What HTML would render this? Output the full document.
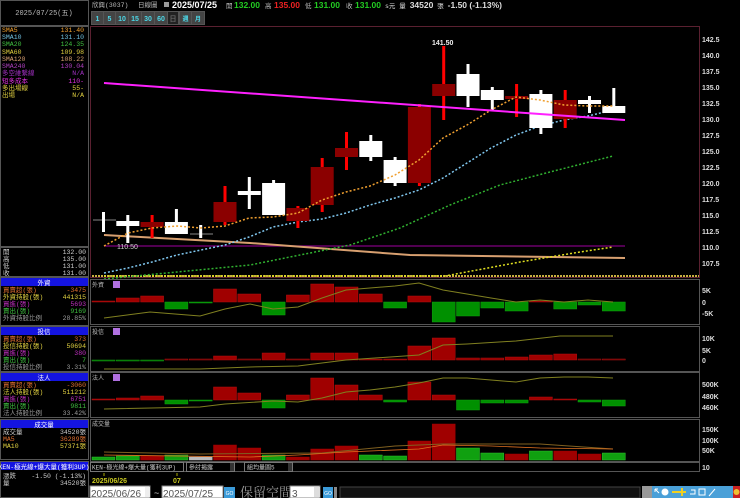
<!DOCTYPE html>
<html><head><meta charset="utf-8"><style>
html,body{margin:0;padding:0;background:#000;width:740px;height:498px;overflow:hidden}
svg{display:block;font-family:"Liberation Sans","Noto Sans CJK TC",sans-serif}
.m{font-family:"Liberation Mono","Noto Sans CJK TC",monospace}
</style></head><body>
<svg id="s" width="740" height="498" viewBox="0 0 740 498" xmlns="http://www.w3.org/2000/svg">
<rect width="740" height="498" fill="#000"/>
<g fill="none" stroke="#555" stroke-width="1">
<rect x="0.5" y="0.5" width="88" height="25"/>
<rect x="0.5" y="26.5" width="88" height="220"/>
<rect x="0.5" y="247.5" width="88" height="29"/>
<rect x="0.5" y="277.5" width="88" height="48"/>
<rect x="0.5" y="326.5" width="88" height="45"/>
<rect x="0.5" y="372.5" width="88" height="45"/>
<rect x="0.5" y="419.5" width="88" height="40"/>
<rect x="0.5" y="461.5" width="88" height="36"/>
</g>
<text x="44" y="15" fill="#bbb" font-size="7" text-anchor="middle" class="m">2025/07/25(五)</text>
<g font-size="6.5" class="m">
<text x="2" y="32" fill="#f0a030">SMA5</text><text x="84" y="32" fill="#f0a030" text-anchor="end">131.40</text>
<text x="2" y="39" fill="#70c0e0">SMA10</text><text x="84" y="39" fill="#70c0e0" text-anchor="end">131.10</text>
<text x="2" y="46" fill="#40c040">SMA20</text><text x="84" y="46" fill="#40c040" text-anchor="end">124.35</text>
<text x="2" y="54" fill="#e0d040">SMA60</text><text x="84" y="54" fill="#e0d040" text-anchor="end">109.98</text>
<text x="2" y="61" fill="#d8a070">SMA120</text><text x="84" y="61" fill="#d8a070" text-anchor="end">108.22</text>
<text x="2" y="68" fill="#b040c0">SMA240</text><text x="84" y="68" fill="#b040c0" text-anchor="end">130.04</text>
<text x="2" y="75" fill="#a030c0">多空維繫線</text><text x="84" y="75" fill="#a030c0" text-anchor="end">N/A</text>
<text x="2" y="83" fill="#e030e0">短多成本</text><text x="84" y="83" fill="#e030e0" text-anchor="end">110-</text>
<text x="2" y="90" fill="#e0d040">多出場線</text><text x="84" y="90" fill="#e0d040" text-anchor="end">55-</text>
<text x="2" y="97" fill="#e0d040">出場</text><text x="84" y="97" fill="#e0d040" text-anchor="end">N/A</text>
</g>
<g font-size="6.5" class="m" fill="#ccc">
<text x="3" y="254">開</text><text x="86" y="254" text-anchor="end">132.00</text>
<text x="3" y="261">高</text><text x="86" y="261" text-anchor="end">135.00</text>
<text x="3" y="268">低</text><text x="86" y="268" text-anchor="end">131.00</text>
<text x="3" y="275">收</text><text x="86" y="275" text-anchor="end">131.00</text>
</g>
<g font-size="6.5" class="m">
<rect x="1" y="278" width="87" height="8" fill="#1414e0"/><text x="44" y="285" fill="#fff" text-anchor="middle">外資</text>
<text x="3" y="292" fill="#e07030">買賣超(張)</text><text x="86" y="292" fill="#e07030" text-anchor="end">-3475</text>
<text x="3" y="299" fill="#e0d040">外資持股(張)</text><text x="86" y="299" fill="#e0d040" text-anchor="end">441315</text>
<text x="3" y="306" fill="#c030c0">買進(張)</text><text x="86" y="306" fill="#c030c0" text-anchor="end">5693</text>
<text x="3" y="313" fill="#40c040">賣出(張)</text><text x="86" y="313" fill="#40c040" text-anchor="end">9169</text>
<text x="3" y="320" fill="#999">外資持股比例</text><text x="86" y="320" fill="#999" text-anchor="end">28.85%</text>
<rect x="1" y="327" width="87" height="8" fill="#1414e0"/><text x="44" y="334" fill="#fff" text-anchor="middle">投信</text>
<text x="3" y="341" fill="#e07030">買賣超(張)</text><text x="86" y="341" fill="#e07030" text-anchor="end">373</text>
<text x="3" y="348" fill="#e0d040">投信持股(張)</text><text x="86" y="348" fill="#e0d040" text-anchor="end">50694</text>
<text x="3" y="355" fill="#c030c0">買進(張)</text><text x="86" y="355" fill="#c030c0" text-anchor="end">380</text>
<text x="3" y="362" fill="#40c040">賣出(張)</text><text x="86" y="362" fill="#40c040" text-anchor="end">7</text>
<text x="3" y="369" fill="#999">投信持股比例</text><text x="86" y="369" fill="#999" text-anchor="end">3.31%</text>
<rect x="1" y="373" width="87" height="8" fill="#1414e0"/><text x="44" y="380" fill="#fff" text-anchor="middle">法人</text>
<text x="3" y="387" fill="#e07030">買賣超(張)</text><text x="86" y="387" fill="#e07030" text-anchor="end">-3060</text>
<text x="3" y="394" fill="#e0d040">法人持股(張)</text><text x="86" y="394" fill="#e0d040" text-anchor="end">511212</text>
<text x="3" y="401" fill="#c030c0">買進(張)</text><text x="86" y="401" fill="#c030c0" text-anchor="end">6751</text>
<text x="3" y="408" fill="#40c040">賣出(張)</text><text x="86" y="408" fill="#40c040" text-anchor="end">9811</text>
<text x="3" y="415" fill="#999">法人持股比例</text><text x="86" y="415" fill="#999" text-anchor="end">33.42%</text>
<rect x="1" y="420" width="87" height="8" fill="#1414e0"/><text x="44" y="427" fill="#fff" text-anchor="middle">成交量</text>
<text x="3" y="434" fill="#ccc">成交量</text><text x="86" y="434" fill="#ccc" text-anchor="end">34520張</text>
<text x="3" y="441" fill="#e07030">MA5</text><text x="86" y="441" fill="#e07030" text-anchor="end">36289張</text>
<text x="3" y="448" fill="#e0d040">MA10</text><text x="86" y="448" fill="#e0d040" text-anchor="end">57371張</text>
<rect x="1" y="462" width="87" height="8" fill="#1414e0"/><text x="44" y="469" fill="#fff" text-anchor="middle">KEN-極光線+爆大量(獲利3UP)</text>
<text x="3" y="478" fill="#ccc">漲跌</text><text x="86" y="478" fill="#ccc" text-anchor="end">-1.50 (-1.13%)</text>
<text x="3" y="485" fill="#ccc">量</text><text x="86" y="485" fill="#ccc" text-anchor="end">34520張</text>
</g>
<g font-size="6.5" class="m">
<text x="92" y="7" fill="#bbb">欣興(3037)</text>
<text x="138" y="7" fill="#bbb">日線圖</text>
<rect x="164" y="2" width="5" height="5" fill="#999"/>
<text x="172" y="8" fill="#fff" font-size="9" font-weight="bold" font-family="Liberation Sans">2025/07/25</text>
<text x="226" y="8" fill="#bbb">開</text><text x="234" y="8" fill="#2c2" font-size="8.5" font-weight="bold" font-family="Liberation Sans">132.00</text>
<text x="265" y="8" fill="#bbb">高</text><text x="274" y="8" fill="#e22" font-size="8.5" font-weight="bold" font-family="Liberation Sans">135.00</text>
<text x="305" y="8" fill="#bbb">低</text><text x="314" y="8" fill="#2c2" font-size="8.5" font-weight="bold" font-family="Liberation Sans">131.00</text>
<text x="346" y="8" fill="#bbb">收</text><text x="355" y="8" fill="#2c2" font-size="8.5" font-weight="bold" font-family="Liberation Sans">131.00</text>
<text x="385" y="8" fill="#ddd">s元 量 <tspan font-weight="bold" font-family="Liberation Sans" font-size="8.5">34520</tspan> 張 <tspan font-weight="bold" font-family="Liberation Sans" font-size="8.5">-1.50 (-1.13%)</tspan></text>
</g>
<g font-size="7" font-weight="bold" font-family="Liberation Sans" fill="#4cd8e8" text-anchor="middle">
<rect x="91" y="11" width="114" height="14" fill="#555"/>
<rect x="92" y="12" width="11" height="12" fill="#444"/><text x="97.5" y="21">1</text>
<rect x="104" y="12" width="11" height="12" fill="#444"/><text x="109.5" y="21">5</text>
<rect x="116" y="12" width="12" height="12" fill="#444"/><text x="122" y="21">10</text>
<rect x="129" y="12" width="12" height="12" fill="#444"/><text x="135" y="21">15</text>
<rect x="142" y="12" width="12" height="12" fill="#444"/><text x="148" y="21">30</text>
<rect x="155" y="12" width="12" height="12" fill="#444"/><text x="161" y="21">60</text>
<rect x="168" y="12" width="10" height="12" fill="#222"/><text x="173" y="21" fill="#666">日</text>
<rect x="180" y="12" width="11" height="12" fill="#444"/><text x="185.5" y="21" font-size="6">週</text>
<rect x="192" y="12" width="12" height="12" fill="#444"/><text x="198" y="21" font-size="6">月</text>
</g>
<rect x="90.5" y="26.5" width="609" height="251" fill="none" stroke="#5a2030"/>
<g id="main"></g>
<g font-size="7" font-weight="bold" font-family="Liberation Sans" fill="#ddd">
<text x="702" y="42">142.5</text><text x="702" y="58">140.0</text><text x="702" y="74">137.5</text><text x="702" y="90">135.0</text><text x="702" y="106">132.5</text><text x="702" y="122">130.0</text><text x="702" y="138">127.5</text><text x="702" y="154">125.0</text><text x="702" y="170">122.5</text><text x="702" y="186">120.0</text><text x="702" y="202">117.5</text><text x="702" y="218">115.0</text><text x="702" y="234">112.5</text><text x="702" y="250">110.0</text><text x="702" y="266">107.5</text>
<text x="432" y="45" fill="#eee">141.50</text>
<text x="117" y="249" fill="#ccc" font-weight="normal">110.50</text>
<text x="702" y="293">5K</text><text x="702" y="305">0</text><text x="702" y="316">-5K</text>
<text x="702" y="341">10K</text><text x="702" y="353">5K</text><text x="702" y="363">0</text>
<text x="702" y="387">500K</text><text x="702" y="399">480K</text><text x="702" y="410">460K</text>
<text x="702" y="432">150K</text><text x="702" y="443">100K</text><text x="702" y="453">50K</text>
<text x="702" y="470">10</text>
</g>
<g fill="none" stroke="#555">
<rect x="90.5" y="279.5" width="609" height="45"/>
<rect x="90.5" y="326.5" width="609" height="45"/>
<rect x="90.5" y="372.5" width="609" height="45"/>
<rect x="90.5" y="419.5" width="609" height="42"/>
<rect x="90.5" y="462.5" width="609" height="9"/>
</g>
<g font-size="6" class="m" fill="#bbb">
<text x="92" y="287">外資</text><rect x="113" y="281" width="7" height="7" fill="#b070e0"/>
<text x="92" y="334">投信</text><rect x="113" y="328" width="7" height="7" fill="#b070e0"/>
<text x="92" y="380">法人</text><rect x="113" y="374" width="7" height="7" fill="#b070e0"/>
<text x="92" y="426">成交量</text>
</g>
<g id="sub"></g>
<g font-size="6" class="m" fill="#ccc">
<rect x="90.5" y="462.5" width="93" height="9" fill="#000" stroke="#777"/><text x="92" y="469.5">KEN-極光線+爆大量(獲利3UP)</text>
<rect x="186.5" y="462.5" width="48" height="9" fill="#000" stroke="#777"/><text x="189" y="469.5">參討揭露</text><rect x="230" y="463" width="4" height="8" fill="#333"/>
<rect x="244.5" y="462.5" width="48" height="9" fill="#000" stroke="#777"/><text x="247" y="469.5">組均量圖5</text><rect x="288" y="463" width="4" height="8" fill="#333"/>
</g>
<line x1="104" y1="473" x2="104" y2="476" stroke="#aa0"/><line x1="177" y1="473" x2="177" y2="476" stroke="#aa0"/>
<text x="92" y="483" font-size="7" font-weight="bold" fill="#c8c820" font-family="Liberation Sans">2025/06/26</text>
<text x="173" y="483" font-size="7" font-weight="bold" fill="#c8c820" font-family="Liberation Sans">07</text>
<rect x="90" y="486" width="60" height="12" fill="#fff" stroke="#888"/>
<text x="91" y="497" font-size="10" fill="#555" font-family="Liberation Sans">2025/06/26</text>
<rect x="145" y="487" width="5" height="10" fill="#eee"/>
<text x="154" y="496" font-size="9" fill="#ccc">~</text>
<rect x="162" y="486" width="61" height="12" fill="#fff" stroke="#888"/>
<text x="163" y="497" font-size="10" fill="#555" font-family="Liberation Sans">2025/07/25</text>
<rect x="224" y="487" width="11" height="11" fill="#3a9ad8"/><text x="229.5" y="495" font-size="5" fill="#fff" text-anchor="middle">GO</text>
<text x="240" y="497" font-size="13" fill="#999" font-family="'Noto Serif CJK SC',serif">保留空間</text>
<rect x="290" y="486" width="30" height="12" fill="#fff" stroke="#888"/>
<text x="292" y="497" font-size="10" fill="#555">3</text>
<rect x="314" y="487" width="6" height="10" fill="#ddd"/>
<rect x="323" y="487" width="10" height="11" fill="#3a9ad8"/><text x="328" y="495" font-size="5" fill="#fff" text-anchor="middle">GO</text>
<rect x="334" y="487" width="3" height="11" fill="#888"/>
<rect x="340" y="487" width="300" height="11" fill="#111" stroke="#444"/>
<rect x="642" y="486" width="10" height="12" fill="#999"/>
<rect x="652" y="486" width="81" height="12" fill="#4aa0d8"/>
<rect x="733" y="486" width="7" height="12" fill="#c82020"/>
<circle cx="736.5" cy="492" r="3" fill="#f0c030"/>
<g fill="#fff" stroke="#fff">
<path d="M655 489 l4 4 M655 489 h3 M655 489 v3" fill="none"/>
<circle cx="665" cy="492" r="3.5" stroke="none"/>
<rect x="672" y="491" width="6" height="2" fill="#f0d020" stroke="none"/>
<path d="M682 488 v8 M678 492 h8" stroke="#f0d020" stroke-width="2"/>
<path d="M690 494 h5 v-4 h-4" fill="none"/>
<rect x="699" y="489" width="6" height="6" fill="none"/>
<path d="M709 496 l6 -7" fill="none"/>
</g>
<script>
var NS="http://www.w3.org/2000/svg";
function el(p,t,a){var e=document.createElementNS(NS,t);for(var k in a)e.setAttribute(k,a[k]);p.appendChild(e);return e;}
var M=document.getElementById("main"),S=document.getElementById("sub");
function X(i){return 92+i*24.3;}
el(M,"line",{x1:92,y1:276,x2:699,y2:276,stroke:"#c8b040","stroke-width":2,"stroke-dasharray":"2,1"});
el(M,"line",{x1:104,y1:246,x2:625,y2:246,stroke:"#800080","stroke-width":1.2});
el(M,"polyline",{points:"104,235 250,243 410,255 625,258",fill:"none",stroke:"#d8a070","stroke-width":2});
el(M,"polyline",{points:"104,276 445,276 520,262 580,252 613,247",fill:"none",stroke:"#e0e020","stroke-width":1.5,"stroke-dasharray":"2,2"});
el(M,"polyline",{points:"104,279 177,272 250,265 300,255 350,245 400,228 450,205 500,185 550,172 613,156",fill:"none",stroke:"#30b030","stroke-width":1.5,"stroke-dasharray":"2,2"});
el(M,"polyline",{points:"104,273 128,268 152,262 177,255 201,250 225,245 249,237 273,227 298,222 322,219 346,213 370,205 395,198 419,190 443,178 467,163 491,148 516,135 540,126 564,120 588,116 613,110",fill:"none",stroke:"#80c8f0","stroke-width":1.5,"stroke-dasharray":"2,2"});
el(M,"line",{x1:93,y1:220,x2:116,y2:220,stroke:"#888"});
el(M,"line",{x1:190,y1:234,x2:213,y2:234,stroke:"#888"});
var C=[["w",220,223,212,232],["w",221,226,215,243],["r",222,227,215,238],["w",222,234,209,234],["w",233,235,225,238],["r",202,222,186,225],["w",191,195,177,209],["w",183,215,180,215],["r",208,221,206,228],["r",167,205,158,212],["r",148,157,132,170],["w",141,157,135,161],["w",160,183,157,186],["r",107,183,104,186],["r",84,96,46,120],["w",74,96,64,107],["w",90,100,87,110],["r",96,99,84,117],["w",94,128,90,134],["r",100,119,90,128],["w",100,104,96,113],["w",106,113,88,113]];
C.forEach(function(c,i){var x=X(i),cx=x+11.5;var w=c[0]=="w";
 el(M,"rect",{x:cx-1.5,y:c[3],width:3,height:c[4]-c[3],fill:w?"#fff":"#ff0000"});
 var bw=(i==0||i==4)?2:23,bx=(i==0||i==4)?cx-1:x;
 el(M,"rect",{x:bx,y:c[1],width:bw,height:Math.max(2,c[2]-c[1]),fill:w?"#fff":"#8b0000"});});
el(M,"polyline",{points:"104,246 128,233 152,228 177,226 201,228 225,226 249,218 273,217 298,213 322,200 346,192 370,186 395,175 419,160 443,138 467,125 491,110 516,97 540,100 564,105 588,106 613,106",fill:"none",stroke:"#f0a030","stroke-width":1.5,"stroke-dasharray":"2,2"});
el(M,"line",{x1:104,y1:83,x2:625,y2:120,stroke:"#ff20ff","stroke-width":2});
function bars(z,v,cols){v.forEach(function(h,i){var c=cols?cols[i]:(h>=0?"#a00000":"#009000");var y=h>=0?z-h:z,hh=Math.max(1,Math.abs(h));
 el(S,"rect",{x:X(i),y:y,width:23,height:hh,fill:c,stroke:h>=0?"#b01010":"#10a010","stroke-width":0.5});});}
bars(302,[1,4,6,-7,-1,13,8,-13,7,18,15,8,-6,6,-20,-14,-6,-9,1,-7,-3,-9]);
el(S,"polyline",{points:"104,318 150,312 200,316 225,309 250,304 273,309 298,307 322,298 346,290 370,288 395,286 419,283 443,290 467,294 491,298 516,302 540,300 564,302 588,300 613,302",fill:"none",stroke:"#808020","stroke-width":1});
bars(360,[-1,-1,-1,1,1,4,1,7,1,7,7,1,1,14,22,2,2,3,5,6,1,1],["#006000","#006000","#006000","#500000","#500000","#a00000","#500000","#a00000","#600000","#a00000","#a00000","#900000","#900000","#a00000","#a00000","#900000","#900000","#a00000","#a00000","#a00000","#400000","#500000"]);
el(S,"polyline",{points:"104,369 200,369 250,367 298,366 346,360 419,355 443,345 467,344 516,341 560,336 613,336",fill:"none",stroke:"#808020","stroke-width":1});
bars(400,[1,2,4,-4,-1,13,7,-8,5,22,15,5,-2,18,5,-10,-3,-3,3,1,-2,-6]);
el(S,"polyline",{points:"104,409 200,407 225,404 273,401 298,402 322,398 346,392 370,390 395,387 419,383 443,378 467,378 491,380 516,382 540,378 564,377 588,377 613,378",fill:"none",stroke:"#808020","stroke-width":1});
var vv=[3,4,4,5,3,15,12,5,3,11,14,5,4,19,36,12,7,6,9,9,6,7],vc="ggrgwrrgrrrggrrggrgrrg";
vv.forEach(function(h,i){var c=vc[i]=="g"?"#10a010":vc[i]=="r"?"#a00000":"#bbb";el(S,"rect",{x:X(i),y:460-h,width:23,height:h,fill:c,stroke:vc[i]=="g"?"#30c030":c,"stroke-width":0.5});});
el(S,"polyline",{points:"104,452 200,454 322,453 395,446 443,444 540,444 613,449",fill:"none",stroke:"#806020","stroke-width":1});
el(S,"polyline",{points:"104,455 250,457 298,455 346,452 419,449 443,445 491,446 540,448 613,449",fill:"none",stroke:"#e07020","stroke-width":0.8});
</script>
</svg>
</body></html>
